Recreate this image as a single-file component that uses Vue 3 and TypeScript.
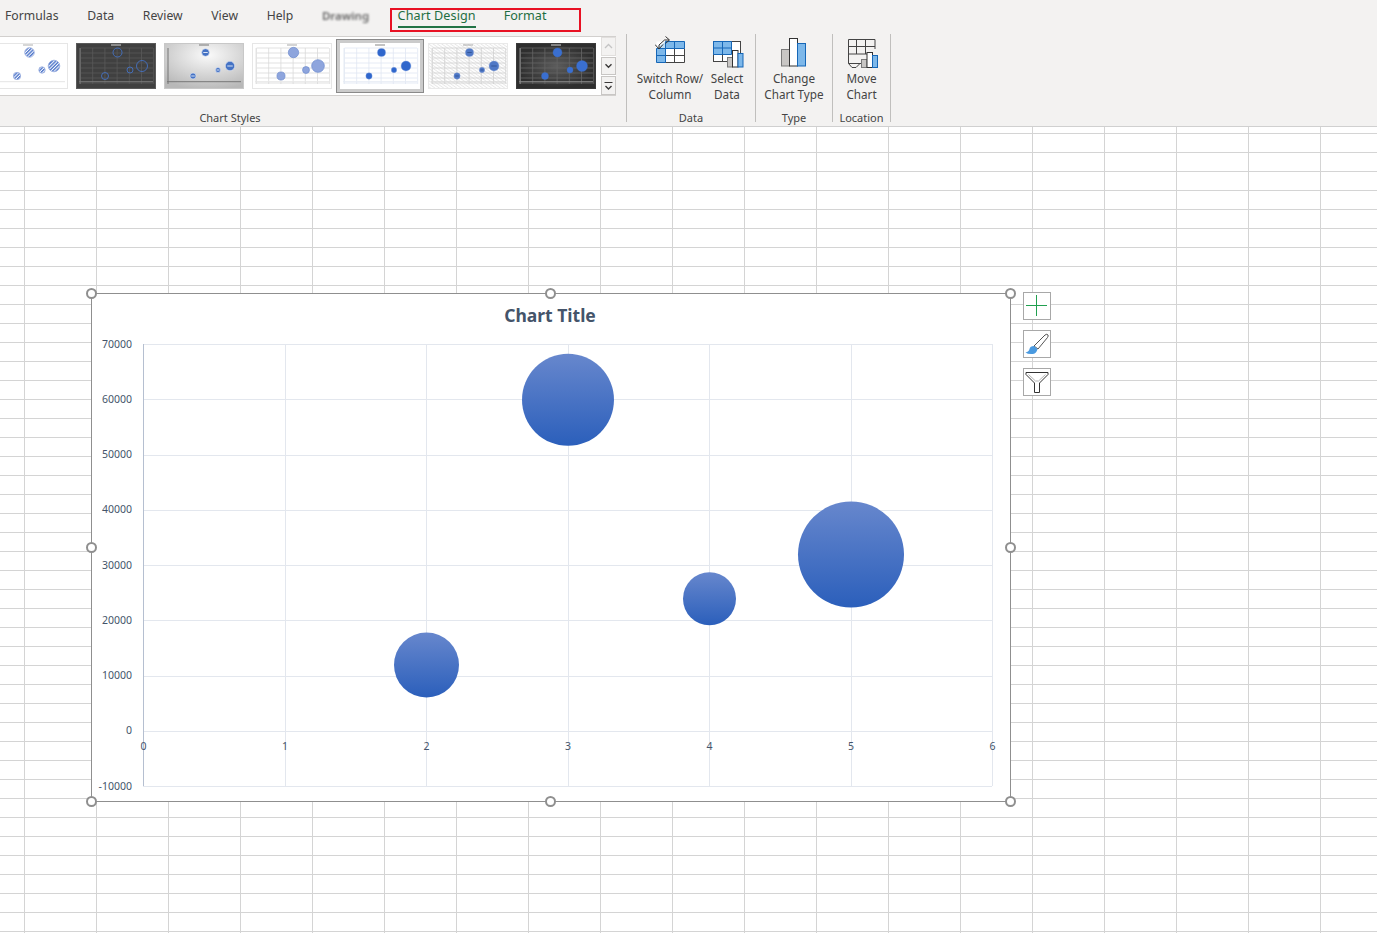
<script setup lang="ts">
// 图库缩略图的气泡位置（相对 80x46 的缩略图）
const thumbBubbles = [
  { cx: 29, cy: 33, r: 3.5 },
  { cx: 41.5, cy: 9.5, r: 4.5 },
  { cx: 54, cy: 27, r: 3 },
  { cx: 66, cy: 23, r: 5.5 },
]

interface Thumb {
  id: string
  bg: string
  frame: string
  grid: string
  axis: string
  title: string
  fill: string
  stroke: string
  strokeWidth: number
  scale: number
  dash?: string
  selected?: boolean
}

const thumbs: Thumb[] = [
  { id: 'hatch', bg: '#ffffff', frame: '#e6e6e6', grid: 'none', axis: '#e4e4e4', title: '#b0b0b0', fill: 'url(#bubbleHatch)', stroke: '#9fb3e2', strokeWidth: 1, scale: 1.05 },
  { id: 'ring', bg: '#404040', frame: '#5a5a5a', grid: '#595959', axis: '#7a7a7a', title: '#d8d8d8', fill: 'none', stroke: '#4472c4', strokeWidth: 0.9, scale: 1 },
  { id: 'silver', bg: 'url(#silverBg)', frame: '#c8c8c8', grid: 'none', axis: '#777777', title: '#777777', fill: '#4472c4', stroke: '#dfe6f5', strokeWidth: 0.6, scale: 0.85, dash: '#ffffff' },
  { id: 'pale', bg: '#ffffff', frame: '#e6e6e6', grid: '#d9d9d9', axis: '#e6e6e6', title: '#aaaaaa', fill: '#8ea5dd', stroke: '#6f8ccf', strokeWidth: 0.7, scale: 1.15 },
  { id: 'solid', bg: '#ffffff', frame: '#ffffff', grid: '#dfe6f2', axis: '#e6ebf4', title: '#888888', fill: '#2f66cc', stroke: '#7f9ede', strokeWidth: 0.4, scale: 0.9, selected: true },
  { id: 'lined', bg: 'url(#lineBg)', frame: '#e9e9e9', grid: '#d0d0d0', axis: '#dddddd', title: '#aaaaaa', fill: '#4f78c6', stroke: '#7f9ad6', strokeWidth: 0.4, scale: 0.9, dash: '#2d4f8f' },
  { id: 'night', bg: 'url(#nightBg)', frame: '#3a3a3a', grid: '#666666', axis: '#8a8a8a', title: '#d8d8d8', fill: '#3a6fd0', stroke: '#3a6fd0', strokeWidth: 0.3, scale: 1 },
]

// 主图表的坐标映射：图表内部坐标系
const plot = { left: 52, right: 901, top: 51, bottom: 493 }
const toX = (v: number) => plot.left + ((plot.right - plot.left) * v) / 6
const toY = (v: number) => plot.top + ((plot.bottom - plot.top) * (70000 - v)) / 80000

const xTicks = [0, 1, 2, 3, 4, 5, 6]
const yTicks = [70000, 60000, 50000, 40000, 30000, 20000, 10000, 0, -10000]

const bubbles = [
  { x: 2, y: 12000, r: 32.5 },
  { x: 3, y: 60000, r: 46 },
  { x: 4, y: 24000, r: 26.5 },
  { x: 5, y: 32000, r: 53 },
]

const handles = [
  { x: 0, y: 0 }, { x: 459, y: 0 }, { x: 919, y: 0 },
  { x: 0, y: 254 }, { x: 919, y: 254 },
  { x: 0, y: 508 }, { x: 459, y: 508 }, { x: 919, y: 508 },
]
</script>

<template>
  <div class="app">
    <!-- 选项卡行 -->
    <nav class="tabs">
      <span class="tab">Formulas</span>
      <span class="tab">Data</span>
      <span class="tab">Review</span>
      <span class="tab">View</span>
      <span class="tab">Help</span>
      <span class="tab smudge">Drawing</span>
      <div class="context-tabs">
        <span class="tab green active">Chart Design</span>
        <span class="tab green">Format</span>
      </div>
    </nav>

    <!-- 功能区 -->
    <section class="ribbon">
      <div class="group group-styles">
        <div class="gallery">
          <div class="thumbs">
            <div v-for="t in thumbs" :key="t.id" class="thumb" :class="{ selected: t.selected }">
              <svg width="80" height="46" viewBox="0 0 80 46">
                <defs>
                  <pattern id="bubbleHatch" width="2.4" height="2.4" patternUnits="userSpaceOnUse" patternTransform="rotate(-45)">
                    <rect width="2.4" height="2.4" fill="#ffffff" />
                    <rect width="2.4" height="1.4" fill="#4f76ca" />
                  </pattern>
                  <pattern id="lineBg" width="2.5" height="2.5" patternUnits="userSpaceOnUse" patternTransform="rotate(35)">
                    <rect width="2.5" height="2.5" fill="#fdfdfd" />
                    <rect width="2.5" height="0.6" fill="#dedede" />
                  </pattern>
                  <radialGradient id="silverBg" cx="0.55" cy="0.25" r="0.8">
                    <stop offset="0" stop-color="#fafafa" />
                    <stop offset="1" stop-color="#b8b8b8" />
                  </radialGradient>
                  <radialGradient id="nightBg">
                    <stop offset="0" stop-color="#5c5c5c" />
                    <stop offset="1" stop-color="#2e2e2e" />
                  </radialGradient>
                </defs>
                <rect x="0" y="0" width="80" height="46" :fill="t.frame" />
                <rect x="1" y="1" width="78" height="44" :fill="t.bg" />
                <rect x="35" y="1.5" width="10" height="1" :fill="t.title" />
                <g v-if="t.grid !== 'none'" :stroke="t.grid" stroke-width="0.8">
                  <line v-for="i in 7" :key="'v' + i" :x1="4.5 + (i - 1) * 12.2" y1="5" :x2="4.5 + (i - 1) * 12.2" y2="41" />
                  <line v-for="i in 8" :key="'h' + i" x1="4.5" :y1="5 + (i - 1) * 5" x2="77" :y2="5 + (i - 1) * 5" />
                </g>
                <rect x="3" y="38.2" width="74" height="1" :fill="t.axis" />
                <rect x="3.5" y="5" width="1" height="36" :fill="t.axis" />
                <g v-for="(b, i) in thumbBubbles" :key="i">
                  <circle :cx="b.cx" :cy="b.cy" :r="b.r * t.scale" :fill="t.fill" :stroke="t.stroke" :stroke-width="t.strokeWidth" />
                  <rect v-if="t.dash" :x="b.cx - b.r * 0.5" :y="b.cy - 0.4" :width="b.r" height="0.8" :fill="t.dash" />
                </g>
              </svg>
            </div>
          </div>
          <div class="scroller">
            <button class="scroll-btn disabled"><svg width="9" height="6" viewBox="0 0 9 6"><path d="M1 5 L4.5 1.5 L8 5" fill="none" stroke="#c4c4c4" stroke-width="1.3" /></svg></button>
            <button class="scroll-btn"><svg width="9" height="6" viewBox="0 0 9 6"><path d="M1.5 1.2 L4.5 4.2 L7.5 1.2" fill="none" stroke="#3b3a39" stroke-width="1.4" /></svg></button>
            <button class="scroll-btn"><svg width="9" height="10" viewBox="0 0 9 10"><path d="M0.5 1.5 H8.5" stroke="#3b3a39" stroke-width="1" /><path d="M1.5 5 L4.5 8 L7.5 5" fill="none" stroke="#3b3a39" stroke-width="1.4" /></svg></button>
          </div>
        </div>
        <div class="group-label label-styles">Chart Styles</div>
      </div>

      <div class="group group-data">
        <div class="buttons">
          <div class="cmd cmd-switch">
            <svg width="30" height="27" viewBox="0 0 30 27" class="cmd-icon">
              <rect x="1.5" y="5.5" width="28" height="21" fill="#ffffff" />
              <path d="M10.5 5.5 H29.5 V12.5 H10.5 Z M1.5 12.5 H10.5 V26.5 H1.5 Z" fill="#7db8ea" />
              <path d="M1.5 12.5 L10.5 5.5 V12.5 Z" fill="#bcdcf5" />
              <path d="M10.5 12.5 V26.5 H29.5 V12.5 M10.5 19.5 H29.5 M19.5 12.5 V26.5" fill="none" stroke="#444444" />
              <path d="M1.5 12.5 H10.5 V26.5 H1.5 Z M1.5 19.5 H10.5 M10.5 5.5 H29.5 V12.5 H10.5 Z M19.5 5.5 V12.5" fill="none" stroke="#1667b7" />
              <path d="M4 13 V9 L9.5 4 H14" fill="none" stroke="#333333" />
              <path d="M0 8.5 L4 13 L8 8.5" fill="none" stroke="#333333" />
              <path d="M10.5 0.5 L14.5 4 L10.5 7.5" fill="none" stroke="#333333" />
            </svg>
            <div class="cmd-text">Switch Row/<br />Column</div>
          </div>
          <div class="cmd cmd-select">
            <svg width="31" height="28" viewBox="0 0 31 28" class="cmd-icon">
              <rect x="0.5" y="1.5" width="27" height="20" fill="#ffffff" stroke="#444444" />
              <rect x="0.5" y="1.5" width="18" height="13" fill="#7db8ea" />
              <path d="M0.5 1.5 H18.5 V14.5 H0.5 Z M0.5 8 H18.5 M9.5 1.5 V14.5" fill="none" stroke="#1667b7" />
              <path d="M9.5 14.5 V21.5" fill="none" stroke="#444444" />
              <rect x="14.5" y="17.5" width="5" height="9.5" fill="#c8c6c4" stroke="#7a7a7a" />
              <rect x="19.5" y="10.5" width="5.5" height="16.5" fill="#ffffff" stroke="#333333" />
              <rect x="25" y="13.5" width="5" height="13.5" fill="#7db8ea" stroke="#1667b7" />
            </svg>
            <div class="cmd-text">Select<br />Data</div>
          </div>
        </div>
        <div class="group-label">Data</div>
      </div>

      <div class="group group-type">
        <div class="buttons">
          <div class="cmd cmd-change">
            <svg width="26" height="29" viewBox="0 0 26 29" class="cmd-icon">
              <rect x="0.5" y="11.5" width="8" height="16.5" fill="#c8c6c4" stroke="#7a7a7a" />
              <rect x="8.5" y="0.5" width="8" height="27.5" fill="#ffffff" stroke="#333333" />
              <rect x="16.5" y="5.5" width="8" height="22.5" fill="#7db8ea" stroke="#1667b7" />
            </svg>
            <div class="cmd-text">Change<br />Chart Type</div>
          </div>
        </div>
        <div class="group-label">Type</div>
      </div>

      <div class="group group-location">
        <div class="buttons">
          <div class="cmd cmd-move">
            <svg width="31" height="30" viewBox="0 0 31 30" class="cmd-icon">
              <path d="M0.5 0.5 H27 V10 M0.5 0.5 V24.5 H13 M0.5 7.5 H27 M0.5 15 H19 M8.5 0.5 V15 M17.5 0.5 V15 M0.5 24.5 L4 28.5 H8 L12 24.5" fill="none" stroke="#444444" />
              <rect x="13.5" y="20.5" width="5.5" height="8" fill="#c8c6c4" stroke="#7a7a7a" />
              <rect x="19" y="13.5" width="5.5" height="15" fill="#ffffff" stroke="#333333" />
              <rect x="24.5" y="16.5" width="5" height="12" fill="#7db8ea" stroke="#1667b7" />
            </svg>
            <div class="cmd-text">Move<br />Chart</div>
          </div>
        </div>
        <div class="group-label">Location</div>
      </div>
    </section>

    <!-- 工作表区域 -->
    <main class="sheet">
      <div class="chart">
        <svg class="chart-svg" width="920" height="509" viewBox="0 0 920 509">
          <defs>
            <linearGradient id="bubbleFill" x1="0" y1="0" x2="0" y2="1">
              <stop offset="0" stop-color="#6787cd" />
              <stop offset="1" stop-color="#2b5fbb" />
            </linearGradient>
          </defs>
          <text class="chart-title" x="459" y="29" text-anchor="middle">Chart Title</text>
          <line v-for="v in yTicks" :key="'gy' + v" :x1="plot.left" :x2="plot.right" :y1="Math.round(toY(v)) + 0.5" :y2="Math.round(toY(v)) + 0.5" class="grid-line" />
          <line v-for="v in xTicks" :key="'gx' + v" :x1="Math.round(toX(v) + 0.4) + 0.5" :x2="Math.round(toX(v) + 0.4) + 0.5" :y1="plot.top" :y2="plot.bottom" class="grid-line" />
          <line :x1="plot.left + 0.5" :x2="plot.left + 0.5" :y1="plot.top" :y2="plot.bottom" class="axis-line" />
          <text v-for="v in yTicks" :key="'ty' + v" class="tick" :x="plot.left - 11" :y="toY(v) + 3.5" text-anchor="end">{{ v }}</text>
          <text v-for="v in xTicks" :key="'tx' + v" class="tick" :x="toX(v) + 0.5" :y="toY(0) + 19" text-anchor="middle">{{ v }}</text>
          <circle v-for="b in bubbles" :key="b.x" :cx="toX(b.x) + 0.5" :cy="toY(b.y) + 0.6" :r="b.r" fill="url(#bubbleFill)" />
        </svg>
        <span v-for="(h, i) in handles" :key="i" class="handle" :style="{ left: h.x + 'px', top: h.y + 'px' }"></span>

        <div class="side-tools">
          <button class="side-btn">
            <svg width="26" height="26" viewBox="0 0 26 26"><path d="M12.5 2 V23 M2 12.5 H23" stroke="#21a050" stroke-width="1" /></svg>
          </button>
          <button class="side-btn">
            <svg width="26" height="26" viewBox="0 0 26 26">
              <path d="M10 15 L21 4 Q23 2.5 24 4 Q24.5 5 23.5 6.5 L14 18 Z" fill="#ffffff" stroke="#555555" stroke-width="1" />
              <path d="M10 15 Q6 15 5.5 18 Q5 20.5 1.5 21.5 Q4 23.5 9 23 Q12.5 22.5 13.5 18 Z" fill="#4a9ae0" />
            </svg>
          </button>
          <button class="side-btn">
            <svg width="26" height="26" viewBox="0 0 26 26">
              <path d="M4.5 5.5 L11.5 12 H14.5 L21.5 5.5" fill="none" stroke="#b5b5b5" stroke-width="1" />
              <path d="M2 3.5 H24 V5.5 L15.5 14 V23.5 H10.5 V14 L2 5.5 Z" fill="none" stroke="#333333" stroke-width="1" />
            </svg>
          </button>
        </div>
      </div>
    </main>
  </div>
</template>

<style>
html, body { margin: 0; padding: 0; height: 100%; overflow: hidden; background: #ffffff; }
#app { height: 100%; }
</style>

<style scoped>
.app {
  height: 933px;
  display: flex;
  flex-direction: column;
  font-family: "Noto Sans", "Open Sans", sans-serif;
  color: #444444;
}

/* 选项卡行 */
.tabs {
  height: 36px;
  box-sizing: border-box;
  background: #f3f2f1;
  display: flex;
  align-items: flex-start;
  padding: 8px 0 0 5px;
  gap: 28.7px;
  font-size: 12.2px;
}
.tab { line-height: 16px; white-space: nowrap; color: #444444; }
.smudge { color: #666666; filter: blur(0.9px); width: 46px; font-size: 11.5px; font-weight: 600; }
.context-tabs {
  display: flex;
  gap: 28px;
  margin-left: -7px;
  width: 191px;
  height: 24px;
  box-sizing: border-box;
  border: 2px solid #e81123;
  padding-left: 6px;
}
.tab.green { color: #1e6e42; margin-top: -2px; font-size: 12.6px; }
.tab.active { border-bottom: 2px solid #217346; height: 18px; letter-spacing: 0.1px; }

/* 功能区 */
.ribbon {
  height: 91px;
  box-sizing: border-box;
  background: #f3f2f1;
  display: flex;
  border-bottom: 1px solid #d0d0d0;
}
.group { display: flex; flex-direction: column; box-sizing: border-box; border-right: 1px solid #c0bfbd; margin: -2px 0 4px; }
.group-styles { width: 627px; }
.group-data { width: 129px; }
.group-type { width: 77px; }
.group-location { width: 58px; }
.group-label {
  margin-top: auto;
  margin-bottom: -3px;
  font-size: 11px;
  line-height: 14px;
  text-align: center;
  color: #444444;
}
.label-styles { width: 460px; }

/* 图库 */
.gallery {
  width: 616px;
  height: 60px;
  margin-top: 2px;
  box-sizing: border-box;
  display: flex;
  background: #ffffff;
  border-top: 1px solid #d2d0ce;
  border-bottom: 1px solid #d2d0ce;
  overflow: hidden;
}
.thumbs { flex: 1; display: flex; gap: 8px; margin-left: -12px; padding-top: 6px; overflow: hidden; }
.thumb { width: 80px; height: 46px; flex: none; }
.thumb svg { display: block; }
.thumb.selected { box-shadow: 0 0 0 3px #cbcbcb, 0 0 0 4px #8a8a8a; }
.scroller { width: 15px; flex: none; display: flex; flex-direction: column; gap: 1px; }
.scroll-btn {
  flex: 1;
  padding: 0;
  margin: 0;
  background: #f3f2f1;
  border: 1px solid #c8c6c4;
  display: flex;
  align-items: center;
  justify-content: center;
}
.scroll-btn.disabled { border-color: #e1dfdd; }

/* 命令按钮 */
.buttons { display: flex; }
.cmd { display: flex; flex-direction: column; align-items: center; height: 68px; justify-content: flex-end; }
.cmd-text { font-size: 11.7px; line-height: 16px; text-align: center; white-space: nowrap; color: #444444; }
.cmd-icon { display: block; flex: none; }
.cmd-switch { width: 86px; }
.cmd-select { width: 28px; }
.cmd-change { width: 76px; }
.cmd-move { width: 58px; }
.cmd-switch .cmd-icon { margin-bottom: 7px; }
.cmd-select .cmd-icon { margin: 0 0 2px 2px; }
.cmd-change .cmd-icon { margin-bottom: 3px; }
.cmd-move .cmd-icon { margin: 0 0 1px 3px; }

/* 工作表网格 */
.sheet {
  flex: 1;
  position: relative;
  background-color: #ffffff;
  background-image:
    linear-gradient(to right, transparent 71px, #d4d4d4 71px),
    linear-gradient(to bottom, transparent 18px, #d4d4d4 18px);
  background-size: 72px 19px;
  background-position: -47px -12px;
}

/* 图表：浮在单元格之上 */
.chart {
  position: absolute;
  left: 91px;
  top: 166px;
  width: 920px;
  height: 509px;
  background: #ffffff;
  box-shadow: inset 0 0 0 1px #8f8f8f;
}
.chart-svg { display: block; }
.chart-title { font-family: "Noto Sans", sans-serif; font-size: 17.5px; font-weight: 700; fill: #44546a; }
.tick { font-family: "Noto Sans", sans-serif; font-size: 10.5px; fill: #44546a; }
.grid-line { stroke: #e3e7ee; stroke-width: 1; }
.axis-line { stroke: #b5bfd0; stroke-width: 1; }

.handle {
  position: absolute;
  width: 11px;
  height: 11px;
  box-sizing: border-box;
  margin: -5px 0 0 -5px;
  border: 2px solid #8f8f8f;
  border-radius: 50%;
  background: #ffffff;
}

.side-tools {
  position: absolute;
  left: 932px;
  top: -1px;
  display: flex;
  flex-direction: column;
  gap: 10px;
}
.side-btn {
  width: 28px;
  height: 28px;
  box-sizing: border-box;
  padding: 0;
  background: #ffffff;
  border: 1px solid #a8a8a8;
  display: block;
}
.side-btn svg { display: block; }
</style>
